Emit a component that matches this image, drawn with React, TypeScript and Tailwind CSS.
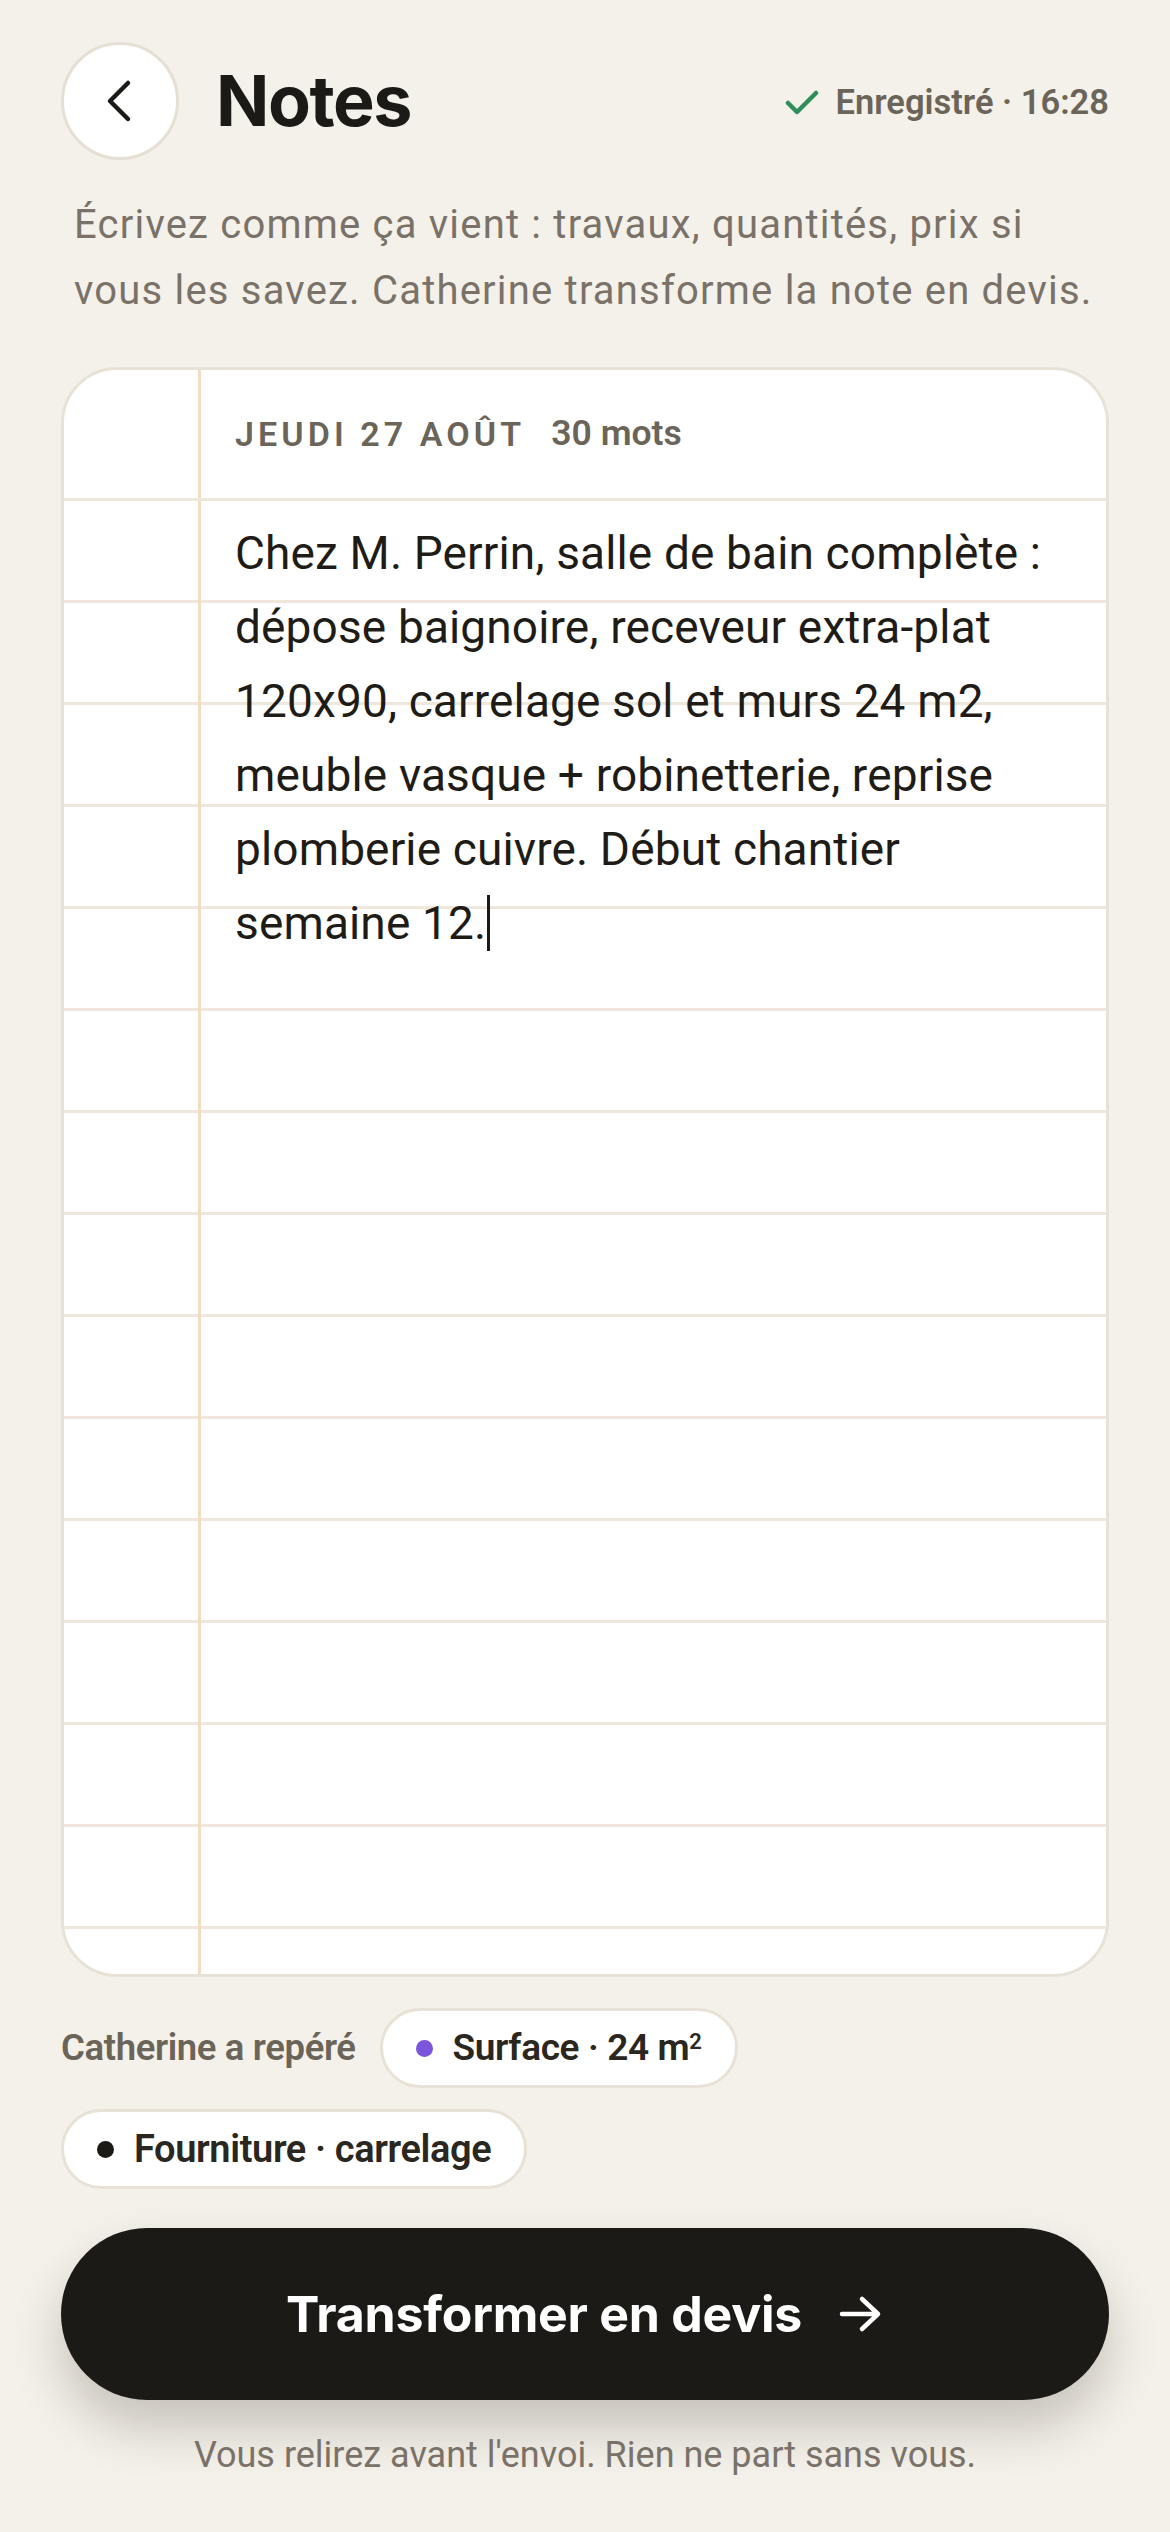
import React from "react";

const body = "font-['Roboto','Noto_Sans',sans-serif]";

export default function App() {
  const lines = [
    "Chez M. Perrin, salle de bain complète :",
    "dépose baignoire, receveur extra-plat",
    "120x90, carrelage sol et murs 24 m2,",
    "meuble vasque + robinetterie, reprise",
    "plomberie cuivre. Début chantier",
  ];
  return (
    <div className={`min-h-[2532px] w-full bg-[#f4f1ea] px-[61px] pt-[42px] ${body}`}>
      {/* Header */}
      <div className="flex h-[118px] items-center">
        <button className="flex h-[118px] w-[118px] shrink-0 items-center justify-center rounded-full border-[3px] border-[#e6dfd3] bg-white">
          <svg width="40" height="48" viewBox="0 0 40 48" fill="none">
            <path d="M28 6 L10 24 L28 42" stroke="#1c1a16" strokeWidth="4.5" strokeLinecap="round" strokeLinejoin="round" />
          </svg>
        </button>
        <h1 className="ml-[37px] font-['Inter',sans-serif] text-[70px] font-bold leading-none tracking-[-0.02em] text-[#1c1a16]">
          Notes
        </h1>
        <div className="ml-auto flex items-center gap-[17px] pt-[4px]">
          <svg width="34" height="28" viewBox="0 0 34 28" fill="none">
            <path d="M3 14 L12 23 L31 4" stroke="#2f8f5b" strokeWidth="4.5" strokeLinecap="round" strokeLinejoin="round" />
          </svg>
          <span className="text-[34.5px] font-semibold text-[#6b6459]">Enregistré · 16:28</span>
        </div>
      </div>

      {/* Description */}
      <p className="mt-[32px] px-[13px] text-[40px] leading-[66px] tracking-[0.03em] text-[#7a7268]">
        Écrivez comme ça vient : travaux, quantités, prix si
        <br />
        vous les savez. Catherine transforme la note en devis.
      </p>

      {/* Notebook card */}
      <div className="mt-[43px] flex h-[1610px] flex-col overflow-hidden rounded-[56px] border-[3px] border-[#e8e1d5] bg-white">
        <div className="flex h-[131px] shrink-0 border-b-[3px] border-[#efe7dc]">
          <div className="w-[137px] shrink-0 border-r-[3px] border-[#f3dcc4]" />
          <div className="flex items-center gap-[26px] pl-[34px]">
            <span className="text-[34px] font-semibold tracking-[0.12em] text-[#6b6459]">JEUDI 27 AOÛT</span>
            <span className="text-[35.5px] font-semibold text-[#6b6459]">30 mots</span>
          </div>
        </div>
        <div className="flex flex-1 bg-[repeating-linear-gradient(to_bottom,transparent_0px,transparent_99px,#efe7dc_99px,#efe7dc_102px)]">
          <div className="w-[137px] shrink-0 border-r-[3px] border-[#f3dcc4]" />
          <div className="pl-[34px] pt-[15px] text-[46px] leading-[74px] tracking-[0.003em] text-[#1f1c17]">
            {lines.map((l) => (
              <div key={l}>{l}</div>
            ))}
            <div className="flex items-center">
              <span>semaine 12.</span>
              <span className="ml-[1px] inline-block h-[56px] w-[3px] bg-[#1c1a16]" />
            </div>
          </div>
        </div>
      </div>

      {/* Detected chips */}
      <div className="mt-[31px] flex flex-wrap items-center gap-x-[24px] gap-y-[21px]">
        <span className="text-[36.5px] font-semibold tracking-[-0.01em] text-[#6b6459]">Catherine a repéré</span>
        <span className="flex h-[80px] items-center gap-[20px] rounded-full border-[3px] border-[#e8e1d5] bg-white px-[33px]">
          <span className="h-[17px] w-[17px] rounded-full bg-[#7b55dc]" />
          <span className="text-[37px] font-semibold tracking-[-0.01em] text-[#2a2620]">
            Surface · 24 m<sup className="text-[22px]">2</sup>
          </span>
        </span>
        <span className="flex h-[80px] items-center gap-[20px] rounded-full border-[3px] border-[#e8e1d5] bg-white px-[33px]">
          <span className="h-[17px] w-[17px] rounded-full bg-[#1c1a16]" />
          <span className="text-[38px] font-semibold tracking-[-0.01em] text-[#2a2620]">Fourniture · carrelage</span>
        </span>
      </div>

      {/* CTA */}
      <button className="mt-[39px] flex h-[172px] w-full items-center justify-center gap-[36px] rounded-full bg-[#1c1a16] shadow-[0_28px_50px_rgba(40,32,20,0.22)]">
        <span className="font-['Inter',sans-serif] text-[50px] font-bold tracking-[-0.005em] text-white">Transformer en devis</span>
        <svg width="46" height="40" viewBox="0 0 46 40" fill="none">
          <path d="M4 20 H40 M24 5 L40 20 L24 35" stroke="white" strokeWidth="4.5" strokeLinecap="round" strokeLinejoin="round" />
        </svg>
      </button>

      <p className="mt-[32px] text-center text-[36px] leading-[46px] text-[#7a7268]">
        Vous relirez avant l'envoi. Rien ne part sans vous.
      </p>
    </div>
  );
}
